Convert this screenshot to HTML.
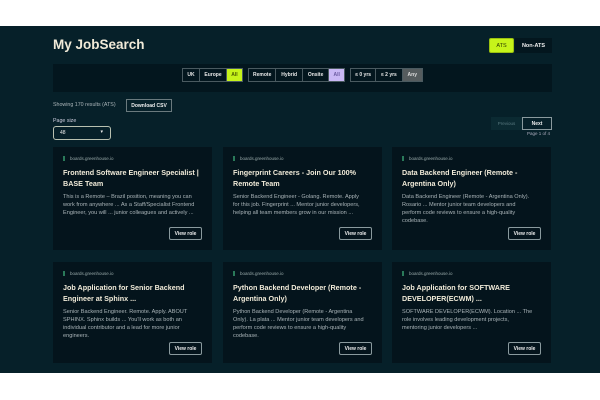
<!DOCTYPE html>
<html><head><style>
*{margin:0;padding:0;box-sizing:border-box}
body{width:600px;height:400px;background:#fff;font-family:"Liberation Sans",sans-serif;position:relative;overflow:hidden}
.main{position:absolute;left:0;top:26px;width:600px;height:347px;background:#062029}
.a{position:absolute}
h1{position:absolute;left:53px;top:37px;font-size:13.5px;color:#f0ead8;font-weight:bold}
.bar{position:absolute;left:53px;top:64px;width:499px;height:28px;background:#03161e}
.grp{position:absolute;top:68px;height:14px;display:flex;border:1px solid #4a5a60}
.grp span{font-size:5px;color:#e8e8e8;font-weight:bold;display:flex;align-items:center;justify-content:center;border-right:1px solid #4a5a60;height:100%}
.grp span:last-child{border-right:none}
.card{position:absolute;width:159px;background:#04141c}
.dom{position:absolute;left:10px;top:9px;font-size:4.5px;color:#9aa;}
.dom:before{content:"";display:inline-block;width:2px;height:5px;background:#2a7a5a;margin-right:5px;vertical-align:middle}
.t{position:absolute;left:10px;top:20px;width:145px;font-size:7.2px;line-height:11px;color:#f0ead8;font-weight:bold}
.d{position:absolute;left:10px;width:133px;font-size:5.6px;line-height:8px;color:#aab4b8}
.v{position:absolute;right:10px;width:33px;height:13px;border:1px solid #8a9a9e;border-radius:2px;font-size:5px;color:#eee;font-weight:bold;display:flex;align-items:center;justify-content:center}
</style></head><body>
<div class="main">
</div>
<h1>My JobSearch</h1>
<div class="a" style="left:489px;top:38px;width:25px;height:15px;background:#c6f41a;border:1px solid #9bc010;border-radius:2px;font-size:5.5px;color:#2a3a00;display:flex;align-items:center;justify-content:center">ATS</div>
<div class="a" style="left:515px;top:38px;width:37px;height:15px;background:#03161e;font-size:5.5px;color:#eee;font-weight:bold;display:flex;align-items:center;justify-content:center">Non-ATS</div>
<div class="bar"></div>
<div class="grp" style="left:182px;width:61px"><span style="width:17px">UK</span><span style="width:27px">Europe</span><span style="width:15px;background:#c6f41a;color:#4a5a00">All</span></div>
<div class="grp" style="left:248px;width:97px"><span style="width:28px">Remote</span><span style="width:27px">Hybrid</span><span style="width:27px">Onsite</span><span style="width:15px;background:#c9b8f5;color:#6a5aa0">All</span></div>
<div class="grp" style="left:350px;width:73px"><span style="width:26px">≤ 0 yrs</span><span style="width:27px">≤ 2 yrs</span><span style="width:20px;background:#555c5e;color:#ddd">Any</span></div>
<div class="a" style="left:53px;top:102px;font-size:5.3px;color:#aab4b8">Showing 170 results (ATS)</div>
<div class="a" style="left:126px;top:99px;width:46px;height:13px;border:1px solid #6a7a7e;font-size:5px;color:#eee;font-weight:bold;display:flex;align-items:center;justify-content:center">Download CSV</div>
<div class="a" style="left:53px;top:118px;font-size:5.3px;color:#ccd">Page size</div>
<div class="a" style="left:53px;top:126px;width:58px;height:14px;border:1.5px solid #b8c0b0;border-radius:3px;font-size:5px;color:#eee;padding:3px 0 0 6px">48<span style="position:absolute;right:7px;top:2px">▾</span></div>
<div class="a" style="left:491px;top:117px;width:31px;height:13px;background:#0b2a32;font-size:4.5px;color:#5a7a80;display:flex;align-items:center;justify-content:center">Previous</div>
<div class="a" style="left:522px;top:117px;width:30px;height:13px;border:1px solid #8a9a9e;font-size:5px;color:#eee;font-weight:bold;display:flex;align-items:center;justify-content:center">Next</div>
<div class="a" style="left:527px;top:131px;font-size:4.5px;color:#aab">Page 1 of 4</div>

<div class="card" style="left:53px;top:147px;height:103px"><div class="dom">boards.greenhouse.io</div><div class="t">Frontend Software Engineer Specialist | BASE Team</div><div class="d" style="top:46px">This is a Remote – Brazil position, meaning you can work from anywhere ... As a Staff/Specialist Frontend Engineer, you will ... junior colleagues and actively ...</div><div class="v" style="top:80px">View role</div></div>
<div class="card" style="left:223px;top:147px;height:103px"><div class="dom">boards.greenhouse.io</div><div class="t">Fingerprint Careers - Join Our 100% Remote Team</div><div class="d" style="top:46px">Senior Backend Engineer - Golang. Remote. Apply for this job. Fingerprint ... Mentor junior developers, helping all team members grow in our mission ...</div><div class="v" style="top:80px">View role</div></div>
<div class="card" style="left:392px;top:147px;height:103px"><div class="dom">boards.greenhouse.io</div><div class="t">Data Backend Engineer (Remote - Argentina Only)</div><div class="d" style="top:46px">Data Backend Engineer (Remote - Argentina Only). Rosario ... Mentor junior team developers and perform code reviews to ensure a high-quality codebase.</div><div class="v" style="top:80px">View role</div></div>

<div class="card" style="left:53px;top:262px;height:101px"><div class="dom">boards.greenhouse.io</div><div class="t">Job Application for Senior Backend Engineer at Sphinx ...</div><div class="d" style="top:46px">Senior Backend Engineer. Remote. Apply. ABOUT SPHINX. Sphinx builds ... You'll work as both an individual contributor and a lead for more junior engineers.</div><div class="v" style="top:80px">View role</div></div>
<div class="card" style="left:223px;top:262px;height:101px"><div class="dom">boards.greenhouse.io</div><div class="t">Python Backend Developer (Remote - Argentina Only)</div><div class="d" style="top:46px">Python Backend Developer (Remote - Argentina Only). La plata ... Mentor junior team developers and perform code reviews to ensure a high-quality codebase.</div><div class="v" style="top:80px">View role</div></div>
<div class="card" style="left:392px;top:262px;height:101px"><div class="dom">boards.greenhouse.io</div><div class="t">Job Application for SOFTWARE DEVELOPER(ECWM) ...</div><div class="d" style="top:46px">SOFTWARE DEVELOPER(ECWM). Location ... The role involves leading development projects, mentoring junior developers ...</div><div class="v" style="top:80px">View role</div></div>
</body></html>
